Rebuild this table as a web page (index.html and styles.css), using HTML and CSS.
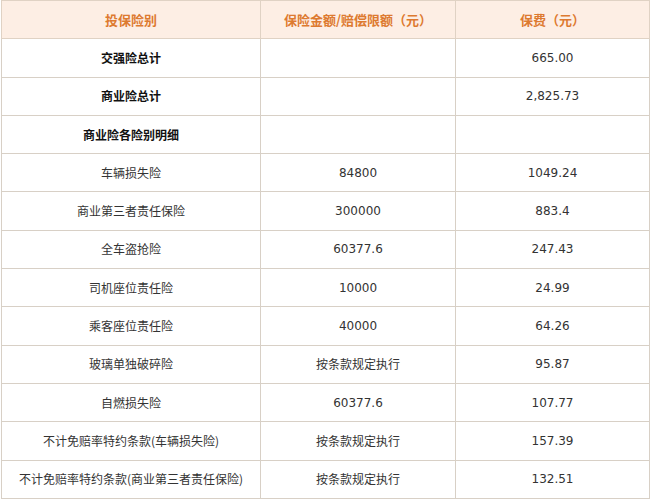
FILE: index.html
```html
<!DOCTYPE html>
<html>
<head>
<meta charset="utf-8">
<link rel="stylesheet" href="styles.css">
</head>
<body>
<table class="premium">
  <colgroup>
    <col class="c1"><col class="c2"><col class="c3">
  </colgroup>
  <thead>
    <tr><th>投保险别</th><th>保险金额/赔偿限额（元）</th><th>保费（元）</th></tr>
  </thead>
  <tbody>
    <tr class="strong"><td class="label">交强险总计</td><td></td><td class="num">665.00</td></tr>
    <tr class="strong"><td class="label">商业险总计</td><td></td><td class="num">2,825.73</td></tr>
    <tr class="strong"><td class="label">商业险各险别明细</td><td></td><td></td></tr>
    <tr><td>车辆损失险</td><td class="num">84800</td><td class="num">1049.24</td></tr>
    <tr><td>商业第三者责任保险</td><td class="num">300000</td><td class="num">883.4</td></tr>
    <tr><td>全车盗抢险</td><td class="num">60377.6</td><td class="num">247.43</td></tr>
    <tr><td>司机座位责任险</td><td class="num">10000</td><td class="num">24.99</td></tr>
    <tr><td>乘客座位责任险</td><td class="num">40000</td><td class="num">64.26</td></tr>
    <tr><td>玻璃单独破碎险</td><td>按条款规定执行</td><td class="num">95.87</td></tr>
    <tr><td>自燃损失险</td><td class="num">60377.6</td><td class="num">107.77</td></tr>
    <tr><td>不计免赔率特约条款(车辆损失险)</td><td>按条款规定执行</td><td class="num">157.39</td></tr>
    <tr><td>不计免赔率特约条款(商业第三者责任保险)</td><td>按条款规定执行</td><td class="num">132.51</td></tr>
  </tbody>
</table>
</body>
</html>
```
FILE: styles.css
```css
html, body {
  margin: 0;
  padding: 0;
  background: #ffffff;
}
.premium {
  margin: 0 0 0 1px;
  width: 648px;
  border-collapse: collapse;
  table-layout: fixed;
  font-family: "Noto Sans CJK SC", "DejaVu Sans", sans-serif;
  font-size: 12px;
  color: #333333;
}
.c1 { width: 259px; }
.c2 { width: 195px; }
.c3 { width: 194px; }
.premium th,
.premium td {
  border: 1px solid #d8d0c6;
  text-align: center;
  vertical-align: middle;
  padding: 0;
  height: 37.3px;
  line-height: 16px;
}
.premium th {
  background: #fdeee4;
  color: #dd7a30;
  font-size: 13px;
  font-weight: bold;
  border-color: #e0d2c4;
}
.premium td.label {
  font-weight: bold;
  color: #111111;
}
.premium td.num {
  font-family: "DejaVu Sans", sans-serif;
  font-weight: normal;
  color: #333333;
}
```
